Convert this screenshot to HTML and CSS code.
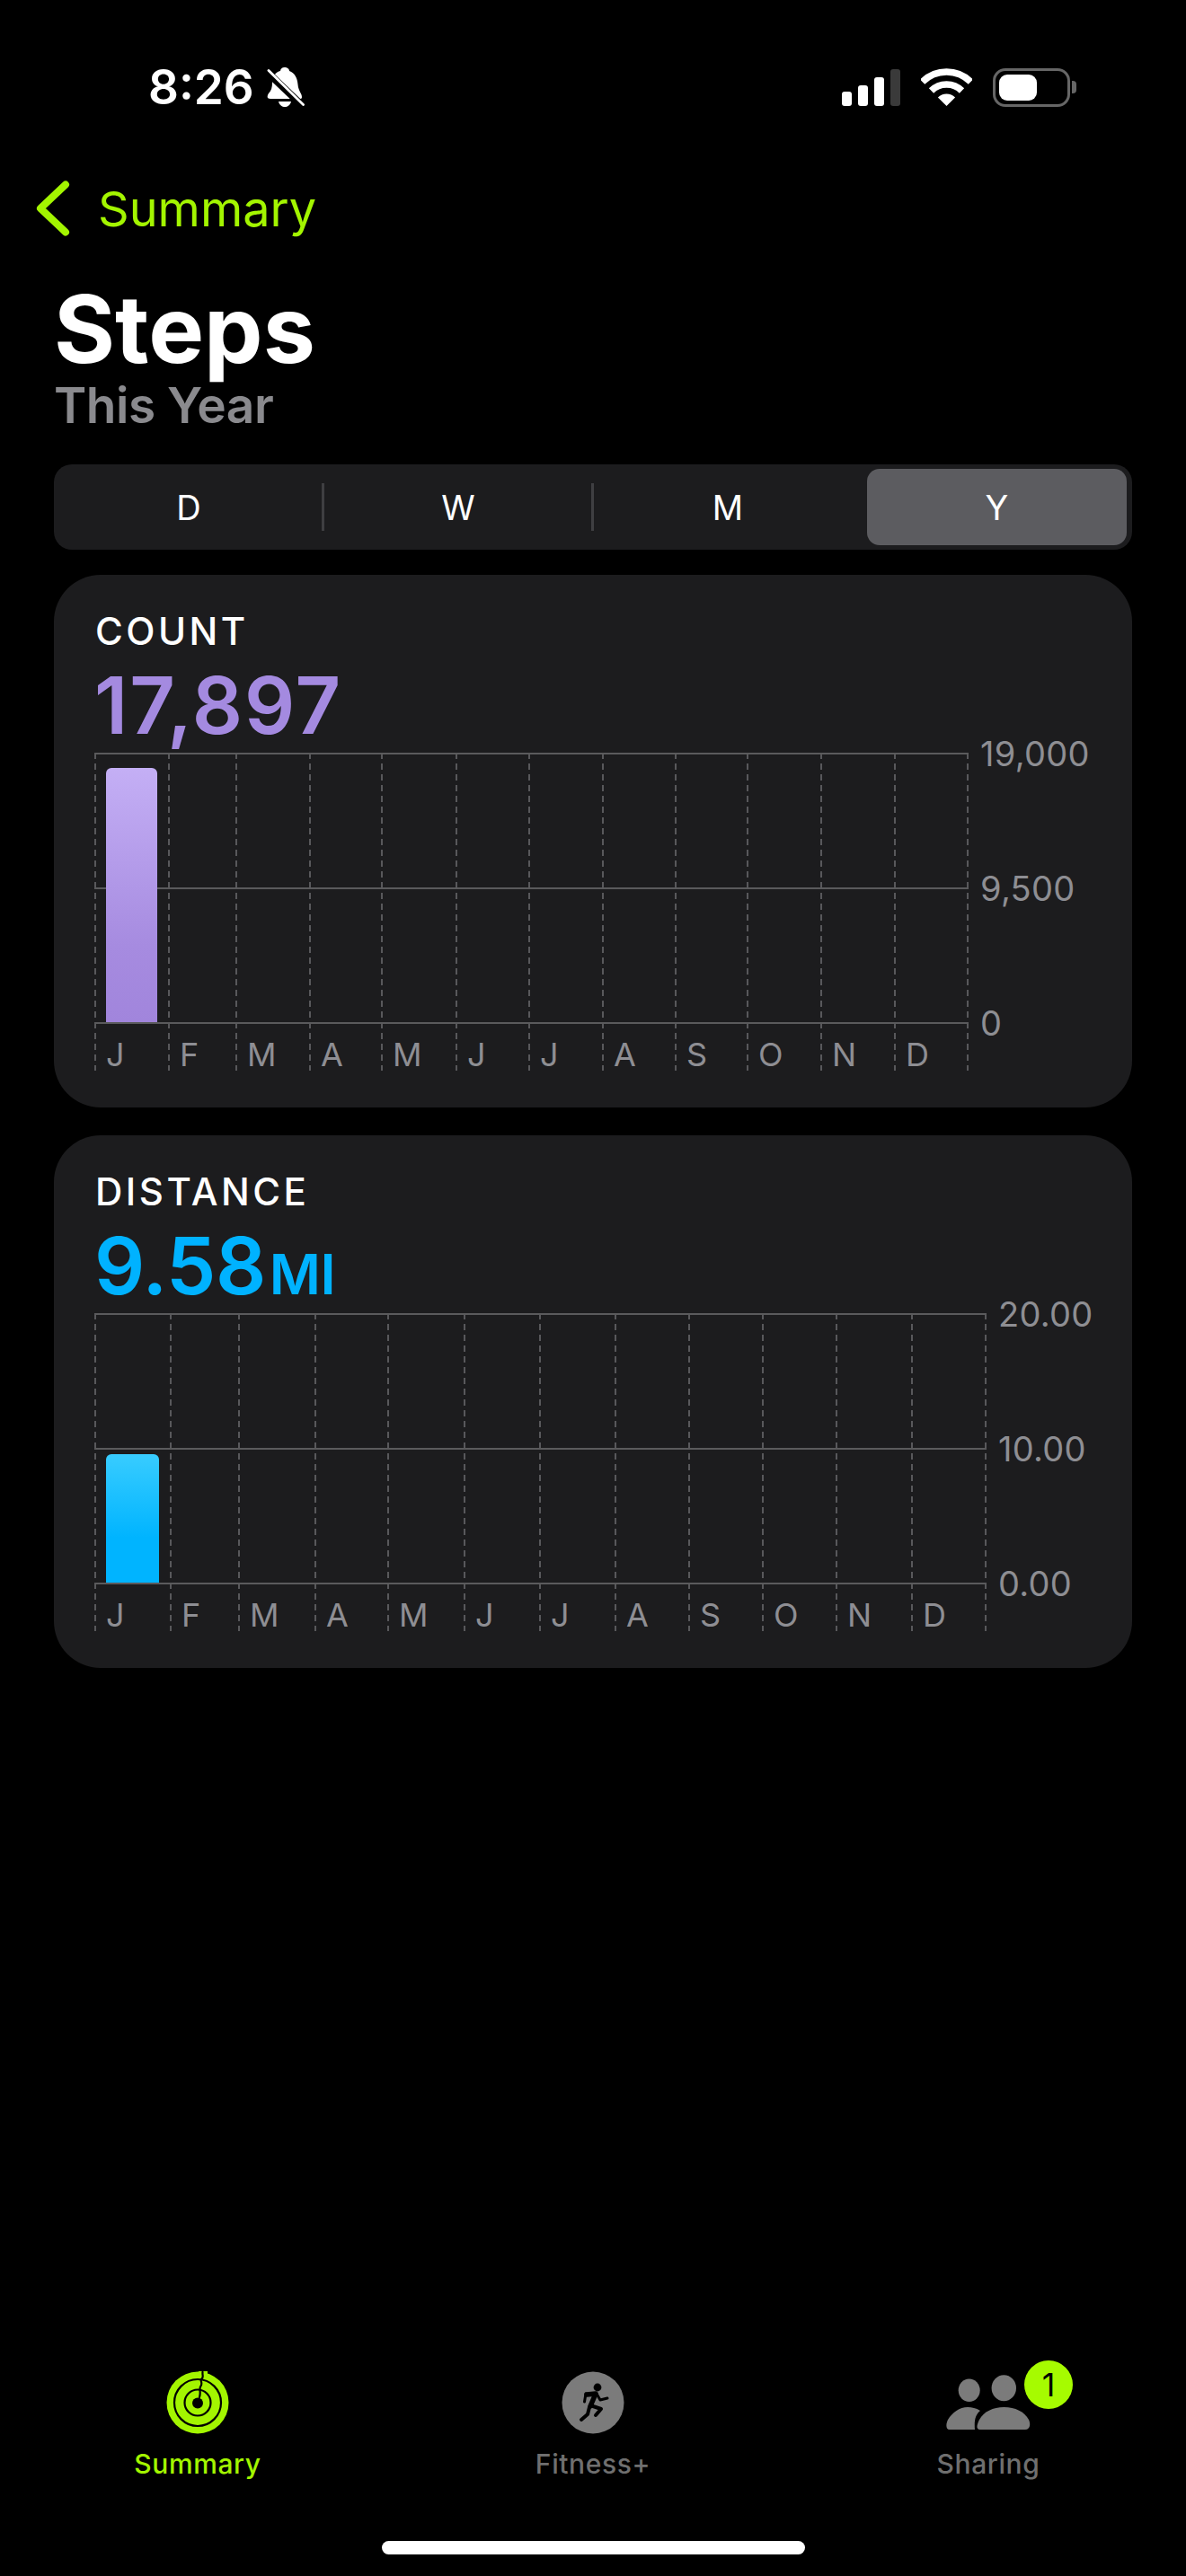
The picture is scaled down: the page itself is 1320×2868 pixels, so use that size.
FILE: index.html
```html
<!DOCTYPE html>
<html lang="en">
<head>
    <meta charset="UTF-8">
    <title>Steps</title>
    <link rel="stylesheet" href="styles.css">
</head>
<body>
    <div class="status">
        <div class="status-left">
            <span class="time">8:26</span>
            <svg class="bell" width="42" height="45" viewBox="0 0 42 45">
                <path fill="#fff" d="M19.5 0C23 0 25 2 25 4C31 6 34 12 34.5 19C35 26 39 29 39 33C39 35 38 35 36 35H4C0 35 0 32 2 29C5 26 6 22 6 17C6 10 10 5 15 4C15 2 17 0 19.5 0Z"/>
                <path fill="#fff" d="M13 38H27C26 42 23 44 20 44C17 44 14 42 13 38Z"/>
                <path stroke="#000" stroke-width="8" d="M-2 3L42 45"/>
                <path stroke="#fff" stroke-width="2.8" stroke-linecap="round" d="M2 3.5L40.5 41.5"/>
            </svg>
        </div>
        <div class="status-right">
            <div class="signal">
                <span class="sig sig1"></span>
                <span class="sig sig2"></span>
                <span class="sig sig3"></span>
                <span class="sig sig4"></span>
            </div>
            <svg width="57" height="42" viewBox="0 0 57 42" fill="none">
                <path stroke="#fff" stroke-width="7.5" d="M1.6 15.1A38 38 0 0 1 55.4 15.1"/>
                <path stroke="#fff" stroke-width="7.5" d="M11.5 25A24 24 0 0 1 45.5 25"/>
                <path fill="#fff" d="M28.5 42L18.9 32.4A13.5 13.5 0 0 1 38.1 32.4Z"/>
            </svg>
            <div class="battery">
                <div class="battery-body"><div class="battery-fill"></div></div>
                <div class="battery-nub"></div>
            </div>
        </div>
    </div>

    <div class="nav">
        <svg width="38" height="62" viewBox="0 0 38 62" fill="none">
            <path stroke="#a3f500" stroke-width="8" stroke-linecap="round" stroke-linejoin="round" d="M33 4.5L5 31L33 57.5"/>
        </svg>
        <span class="nav-label">Summary</span>
    </div>

    <main class="content">
        <h1 class="title">Steps</h1>
        <div class="subtitle">This Year</div>

        <div class="segments">
            <div class="seg">D</div>
            <div class="seg seg-line">W</div>
            <div class="seg seg-line">M</div>
            <div class="seg seg-active">Y</div>
        </div>

        <section class="card">
            <div class="card-title">COUNT</div>
            <div class="card-value purple">17,897</div>
            <div class="chart">
                <div class="plot plot-count">
                    <div class="col"><div class="area"><div class="bar bar-count" style="height: 283px"></div></div><div class="month">J</div></div>
                    <div class="col"><div class="area"></div><div class="month">F</div></div>
                    <div class="col"><div class="area"></div><div class="month">M</div></div>
                    <div class="col"><div class="area"></div><div class="month">A</div></div>
                    <div class="col"><div class="area"></div><div class="month">M</div></div>
                    <div class="col"><div class="area"></div><div class="month">J</div></div>
                    <div class="col"><div class="area"></div><div class="month">J</div></div>
                    <div class="col"><div class="area"></div><div class="month">A</div></div>
                    <div class="col"><div class="area"></div><div class="month">S</div></div>
                    <div class="col"><div class="area"></div><div class="month">O</div></div>
                    <div class="col"><div class="area"></div><div class="month">N</div></div>
                    <div class="col col-last"><div class="area"></div><div class="month">D</div></div>
                    <div class="hlines"><div class="hline"></div><div class="hline"></div><div class="hline"></div></div>
                </div>
                <div class="yaxis">
                    <div class="ylabel">19,000</div>
                    <div class="ylabel">9,500</div>
                    <div class="ylabel">0</div>
                </div>
            </div>
        </section>

        <section class="card">
            <div class="card-title">DISTANCE</div>
            <div class="card-value blue">9.58<span class="unit">MI</span></div>
            <div class="chart">
                <div class="plot plot-distance">
                    <div class="col"><div class="area"><div class="bar bar-distance" style="height: 143px"></div></div><div class="month">J</div></div>
                    <div class="col"><div class="area"></div><div class="month">F</div></div>
                    <div class="col"><div class="area"></div><div class="month">M</div></div>
                    <div class="col"><div class="area"></div><div class="month">A</div></div>
                    <div class="col"><div class="area"></div><div class="month">M</div></div>
                    <div class="col"><div class="area"></div><div class="month">J</div></div>
                    <div class="col"><div class="area"></div><div class="month">J</div></div>
                    <div class="col"><div class="area"></div><div class="month">A</div></div>
                    <div class="col"><div class="area"></div><div class="month">S</div></div>
                    <div class="col"><div class="area"></div><div class="month">O</div></div>
                    <div class="col"><div class="area"></div><div class="month">N</div></div>
                    <div class="col col-last"><div class="area"></div><div class="month">D</div></div>
                    <div class="hlines"><div class="hline"></div><div class="hline"></div><div class="hline"></div></div>
                </div>
                <div class="yaxis">
                    <div class="ylabel">20.00</div>
                    <div class="ylabel">10.00</div>
                    <div class="ylabel">0.00</div>
                </div>
            </div>
        </section>
    </main>

    <nav class="tabs">
        <div class="tab tab-active">
            <svg class="tab-icon" width="70" height="70" viewBox="0 0 70 70" fill="none">
                <circle cx="35" cy="35" r="34.5" fill="#a3f500"/>
                <circle cx="35" cy="35" r="26" stroke="#000" stroke-width="2.2"/>
                <circle cx="35" cy="35" r="14.5" stroke="#000" stroke-width="2.2"/>
                <circle cx="35" cy="35.5" r="6" fill="#000"/>
                <path fill="#a3f500" d="M36 0H46V8H36Z"/>
                <path stroke="#000" stroke-width="2.2" stroke-linecap="round" d="M40.5 1C40 5 42 6 39.5 8.5C37 10 41 13 38.5 16.5C36 19 39 23 37 29"/>
            </svg>
            <span class="tab-label">Summary</span>
        </div>
        <div class="tab">
            <svg class="tab-icon" width="70" height="70" viewBox="0 0 70 70" fill="none">
                <circle cx="35" cy="35" r="34.5" fill="#7b7b7b"/>
                <circle cx="40" cy="18" r="4.4" fill="#000"/>
                <path stroke="#000" stroke-width="5.5" stroke-linecap="round" stroke-linejoin="round" d="M28 26L38 25L32 39"/>
                <g stroke="#000" stroke-linecap="round" stroke-linejoin="round">
                    <path stroke-width="3" d="M27 25L25.5 34"/>
                    <path stroke-width="3" d="M39 25L43 32L51 30"/>
                    <path stroke-width="4" d="M32 38L44 42L38 49"/>
                    <path stroke-width="4" d="M31 40L29 48L22 54"/>
                </g>
            </svg>
            <span class="tab-label">Fitness+</span>
        </div>
        <div class="tab">
            <div class="share-icon">
                <svg width="94" height="62" viewBox="0 0 94 62" fill="#7b7b7b">
                    <ellipse cx="25.7" cy="17.3" rx="12" ry="12.8"/>
                    <ellipse cx="64.3" cy="14.7" rx="13.7" ry="14.5"/>
                    <path d="M38 61C32 61 35 54 37 50C42 41 52 36 64.5 36C77 36 87 41 92 50C94 54 94 61 88 61Z"/>
                    <path d="M4 61C-1 61 0 54 2 50C7 42 15 36 24 36C29 36 33 37 38 40C33 44 31 50 32 61Z"/>
                </svg>
                <span class="badge">1</span>
            </div>
            <span class="tab-label">Sharing</span>
        </div>
    </nav>

    <div class="home"></div>
</body>
</html>
```

FILE: styles.css
```css
* {
    box-sizing: border-box;
}
body {
    margin: 0;
    width: 1320px;
    height: 2868px;
    background: #000;
    color: #fff;
    font-family: Inter, "Liberation Sans", sans-serif;
    display: flex;
    flex-direction: column;
    overflow: hidden;
}

/* status bar */
.status {
    margin-top: 52px;
    height: 90px;
    padding: 0 122px 0 165px;
    display: flex;
    justify-content: space-between;
    align-items: center;
}
.status-left {
    display: flex;
    align-items: center;
    gap: 14px;
}
.time {
    font-size: 53px;
    font-weight: 600;
    line-height: 60px;
}
.status-right {
    display: flex;
    align-items: center;
    gap: 23px;
}
.signal {
    display: flex;
    align-items: flex-end;
    gap: 7px;
    height: 41px;
}
.sig {
    width: 11px;
    background: #fff;
    border-radius: 3px;
}
.sig1 { height: 16px; }
.sig2 { height: 23px; }
.sig3 { height: 32px; }
.sig4 { height: 41px; background: #3a3a3a; }
.battery {
    display: flex;
    align-items: center;
    gap: 2px;
}
.battery-body {
    width: 86px;
    height: 43px;
    border: 3px solid #666;
    border-radius: 14px;
    padding: 4px;
}
.battery-fill {
    width: 42px;
    height: 100%;
    background: #fff;
    border-radius: 9px;
}
.battery-nub {
    width: 5px;
    height: 14px;
    background: #666;
    border-radius: 0 4px 4px 0;
}

/* nav */
.nav {
    margin-top: 59px;
    height: 62px;
    padding-left: 40px;
    display: flex;
    align-items: center;
    gap: 31px;
}
.nav-label {
    padding-top: 2px;
    font-size: 54px;
    line-height: 62px;
    color: #a3f500;
}

.content {
    flex: 1;
    padding: 0 60px;
}
.title {
    margin: 53px 0 0;
    font-size: 104px;
    font-weight: 700;
    line-height: 100px;
}
.subtitle {
    margin-top: 5px;
    font-size: 55px;
    font-weight: 600;
    line-height: 60px;
    letter-spacing: -0.5px;
    color: #8a8a8e;
}

/* D W M Y */
.segments {
    margin-top: 36px;
    height: 95px;
    background: #1c1c1e;
    border-radius: 20px;
    display: grid;
    grid-template-columns: repeat(4, 1fr);
    align-items: center;
}
.seg {
    height: 85px;
    font-size: 38px;
    display: flex;
    align-items: center;
    justify-content: center;
    position: relative;
}
.seg-line::before {
    content: "";
    position: absolute;
    left: -2px;
    top: 16px;
    bottom: 16px;
    width: 3px;
    background: #3f3f42;
}
.seg-active {
    background: #5c5c60;
    border-radius: 14px;
    margin: 0 6px 0 5px;
}

/* cards */
.card {
    margin-top: 28px;
    height: 593px;
    background: #1c1c1e;
    border-radius: 52px;
    padding: 41px 0 0 45px;
}
.card + .card {
    margin-top: 31px;
}
.card-title {
    padding-left: 1px;
    font-size: 42px;
    font-weight: 500;
    line-height: 44px;
    letter-spacing: 3.5px;
}
.card-value {
    margin-top: 15px;
    height: 90px;
    font-size: 88px;
    font-weight: 600;
    line-height: 90px;
}
.purple {
    color: #a48ae0;
    letter-spacing: 2px;
}
.blue {
    color: #00b2ff;
    letter-spacing: -0.5px;
}
.unit {
    font-size: 62px;
    margin-left: 4px;
}
.chart {
    margin-top: 8px;
    display: flex;
}
.plot {
    display: grid;
    height: 354px;
    position: relative;
}
.plot-count {
    grid-template-columns: 82px 75px 82px 80px 83px 81px 82px 81px 80px 82px 82px 83px;
}
.plot-distance {
    grid-template-columns: 84px 76px 85px 81px 85px 84px 84px 82px 82px 82px 84px 84px;
}
.col {
    background: repeating-linear-gradient(#58585b 0 7px, transparent 7px 12px) left top / 2px 100% no-repeat;
}
.col-last {
    background:
        repeating-linear-gradient(#58585b 0 7px, transparent 7px 12px) left top / 2px 100% no-repeat,
        repeating-linear-gradient(#58585b 0 7px, transparent 7px 12px) right top / 2px 100% no-repeat;
}
.area {
    height: 300px;
    padding-left: 13px;
    display: flex;
    align-items: flex-end;
}
.bar {
    border-radius: 6px 6px 0 0;
    position: relative;
    z-index: 1;
}
.bar-count {
    width: 57px;
    background: linear-gradient(#c4aff5, #a68be0 70%, #a185dc);
}
.bar-distance {
    width: 59px;
    background: linear-gradient(#38ccff, #00b4ff 65%);
}
.month {
    margin-top: 18px;
    padding-left: 13px;
    font-size: 36px;
    line-height: 36px;
    color: #8e8e93;
}
.hlines {
    position: absolute;
    top: 0;
    left: 0;
    right: 0;
}
.hline {
    height: 2px;
    margin-bottom: 148px;
    background: #5a5a5c;
}
.yaxis {
    margin: -21px 0 0 13px;
}
.ylabel {
    height: 150px;
    font-size: 38px;
    line-height: 44px;
    letter-spacing: 0.3px;
    color: #8e8e93;
}

/* tab bar */
.tabs {
    display: grid;
    grid-template-columns: repeat(3, 1fr);
    margin-bottom: 66px;
}
.tab {
    display: flex;
    flex-direction: column;
    align-items: center;
}
.tab-icon {
    display: block;
}
.tab-label {
    margin-top: 14px;
    font-size: 30px;
    font-weight: 500;
    line-height: 39px;
    letter-spacing: 0.6px;
    color: #6f6f6f;
}
.tab-active .tab-label {
    color: #a3f500;
}
.share-icon {
    height: 70px;
    padding-top: 4px;
    position: relative;
}
.share-icon svg {
    display: block;
}
.badge {
    position: absolute;
    left: 87px;
    top: -12px;
    width: 54px;
    height: 54px;
    border-radius: 50%;
    background: #a6fb00;
    color: #000;
    font-size: 36px;
    line-height: 54px;
    text-align: center;
}
.home {
    width: 471px;
    height: 15px;
    margin: 0 auto 24px;
    background: #fff;
    border-radius: 8px;
}
```
